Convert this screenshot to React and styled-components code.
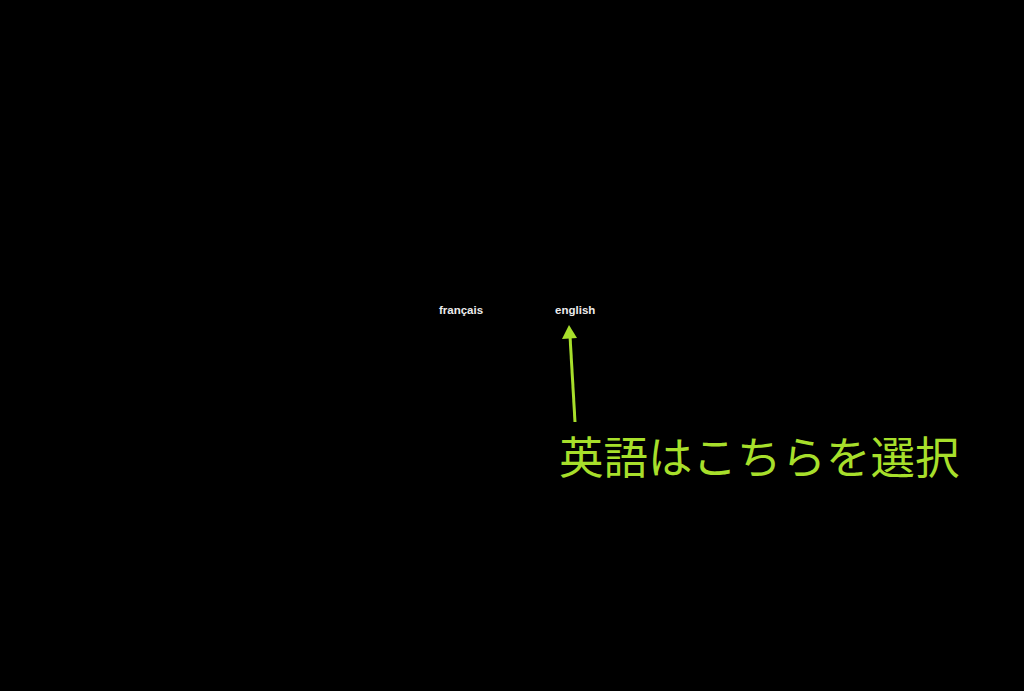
import React from "react";
import styled, { createGlobalStyle } from "styled-components";

const Global = createGlobalStyle`
  html, body { margin: 0; padding: 0; background: #000; }
  body { font-family: "Liberation Sans", Arial, sans-serif; }
`;

const Page = styled.div`
  width: 1024px;
  height: 691px;
  background: #000;
  overflow: hidden;
  display: flex;
  flex-direction: column;
  padding-top: 304px;
  box-sizing: border-box;
`;

const LangRow = styled.nav`
  display: flex;
  gap: 72px;
  padding-left: 439px;
`;

const LangLink = styled.a`
  font-family: "Liberation Sans", Arial, sans-serif;
  font-weight: 700;
  font-size: 11.5px;
  line-height: 13px;
  color: #ececec;
  text-decoration: none;
`;

const Callout = styled.div`
  display: flex;
  flex-direction: column;
  align-items: flex-start;
  margin-left: 555px;
  margin-top: 5px;
`;

const Arrow = styled.svg`
  display: block;
  width: 30px;
  height: 102px;
`;

const Caption = styled.div`
  margin-top: 9px;
  margin-left: 4px;
  font-family: "Noto Sans CJK JP", sans-serif;
  font-weight: 400;
  font-size: 44.5px;
  line-height: 44px;
  color: #a7df2b;
  white-space: nowrap;
`;

export default function App() {
  return (
    <>
      <Global />
      <Page>
        <LangRow>
          <LangLink href="#">français</LangLink>
          <LangLink href="#">english</LangLink>
        </LangRow>
        <Callout>
          <Arrow viewBox="0 0 30 102">
            <line x1="20" y1="100" x2="15" y2="14" stroke="#a7df2b" strokeWidth="3" />
            <polygon points="14,3 7,17 22,16" fill="#a7df2b" />
          </Arrow>
          <Caption>英語はこちらを選択</Caption>
        </Callout>
      </Page>
    </>
  );
}
